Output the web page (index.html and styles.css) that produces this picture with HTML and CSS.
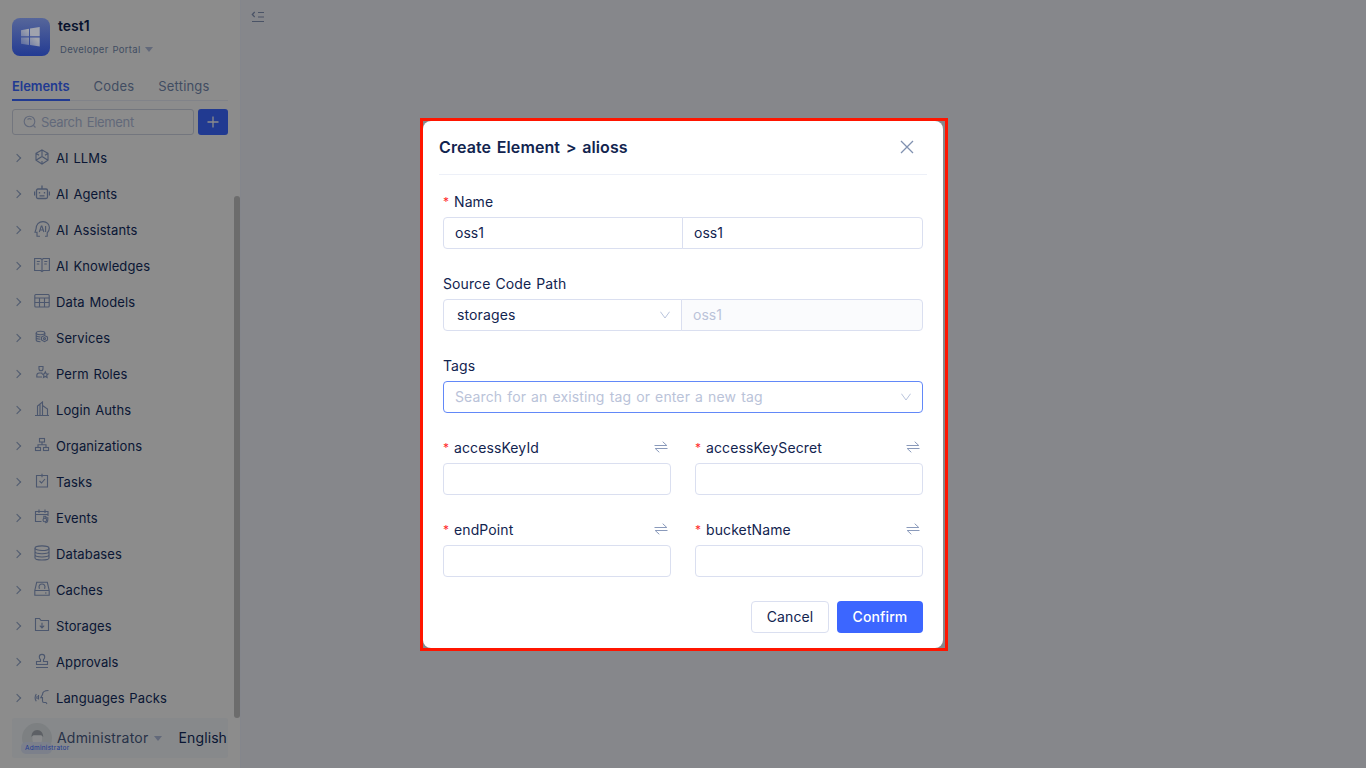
FILE: index.html
```html
<!DOCTYPE html>
<html lang="en">
<head>
<meta charset="utf-8">
<title>Create Element</title>
<link rel="stylesheet" href="styles.css">
</head>
<body>
<div class="app">
  <aside class="sidebar">
    <header class="brand">
      <div class="logo">
        <svg width="38" height="38" viewBox="0 0 38 38"><defs><linearGradient id="pane" x1="1" y1="0" x2="0" y2="1"><stop offset=".4" stop-color="#a0a3ad"/><stop offset="1" stop-color="#5566a0"/></linearGradient></defs><path fill="url(#pane)" d="M9 12.200l8-1.500v7.600H9zM18 10.500l9.700-1.500v9.300H18zM9 19.400h8v7.600l-8-1.300zM18 19.400h9.700V28.500l-9.700-1.400z"/></svg>
      </div>
      <div class="brand-text">
        <div class="brand-name">test1</div>
        <div class="portal">Developer Portal<i class="caret"></i></div>
      </div>
    </header>
    <nav class="tabs"><span class="tab active">Elements</span><span class="tab">Codes</span><span class="tab">Settings</span></nav>
    <div class="search-row">
      <div class="search"><svg width="14" height="14" viewBox="0 0 14 14" class="line"><circle cx="6.500" cy="6.500" r="5.300"/><path d="M10.500 10.500l2 2M4.500 4.500a3 3 0 0 1 4 0"/></svg><span>Search Element</span></div>
      <button class="add"><svg width="12" height="12" viewBox="0 0 12 12"><path d="M6 .5v11M.5 6h11" stroke="#8c8c8c" stroke-width="1.300"/></svg></button>
    </div>
    <ul class="tree">
      <li><i class="arrow"></i><svg class="line" viewBox="0 0 16 16"><path d="M8 1l6 3.300v7L8 15l-6-3.700v-7zM8 1v6.500M2 11.300l6-3.800 6 3.800M2 4.300l3 2M14 4.300l-3 2M8 15v-3"/></svg><span>AI LLMs</span></li>
      <li><i class="arrow"></i><svg class="line strong" viewBox="0 0 16 16"><rect x="2.500" y="4" width="11" height="9.500" rx="1.500"/><path d="M8 4V.5M.5 6.500v4M15.500 6.500v4M5.500 7v1.500M10.500 7v1.500M5.500 10.800h5"/></svg><span>AI Agents</span></li>
      <li><i class="arrow"></i><svg class="line" viewBox="0 0 16 16"><path d="M6 15.200H3v-4H1l1-3C2 3.500 4.800.6 9 .6c3.800 0 6.400 2.700 6.400 6.200 0 2.500-1 3.700-2.200 5v3.400H11M5.300 11l2-6h.6l2 6M6 9h3.300M11.600 5v6"/></svg><span>AI Assistants</span></li>
      <li><i class="arrow"></i><svg class="line" viewBox="0 0 16 16"><path d="M.6 1.500h6L8 2.500l1.400-1h6v12h-6l-1.400 1-1.400-1h-6zM8 2.500v12M2.800 4.500h3M2.800 7h2.500M10.300 4.500h3M10.300 7h2.500"/></svg><span>AI Knowledges</span></li>
      <li><i class="arrow"></i><svg class="line" viewBox="0 0 16 16"><rect x=".8" y="1.500" width="14.400" height="12.500" rx="1"/><path d="M.8 5h14.400M.8 9.500h14.400M5.500 5v9M10.500 5v9"/></svg><span>Data Models</span></li>
      <li><i class="arrow"></i><svg class="line" viewBox="0 0 16 16"><ellipse cx="6.500" cy="4" rx="4.300" ry="1.700"/><path d="M2.200 4v7c0 1 1.600 1.700 4.300 1.700M10.800 4v2M2.200 6.300c0 1.100 2 1.700 4.300 1.700M2.200 8.600c0 1.100 2 1.700 4.300 1.700"/><path d="M10.500 6.500l3 1.500v3l-3 1.700-3-1.700V8z"/><circle cx="10.500" cy="9.600" r="1"/></svg><span>Services</span></li>
      <li><i class="arrow"></i><svg class="line" viewBox="0 0 16 16"><path d="M5 1.500h4v2.300C9 5 8.200 5.800 7 5.800S5 5 5 3.800zM8 12H2.800v-1.500c0-1.600 1-2.500 2.500-2.500h3M11.300 6.800l.9 1.900 2 .2-1.500 1.400.4 2.100-1.800-1-1.800 1 .4-2.100-1.500-1.400 2-.2z"/></svg><span>Perm Roles</span></li>
      <li><i class="arrow"></i><svg class="line" viewBox="0 0 16 16"><path d="M1 14.500h14M3.500 14.500V5L8.500 1v13.500M8.500 4.500L13.500 8v6.500M6 14.500V3"/></svg><span>Login Auths</span></li>
      <li><i class="arrow"></i><svg class="line" viewBox="0 0 16 16"><rect x="5.500" y="1.500" width="5" height="3.500"/><rect x="1.500" y="10.500" width="5" height="3"/><rect x="9.500" y="10.500" width="5" height="3"/><path d="M8 5v2.700M4 10.500V7.700h8v2.800"/></svg><span>Organizations</span></li>
      <li><i class="arrow"></i><svg class="line" viewBox="0 0 16 16"><path d="M6 2.500H2.500v11.500h11V2.500H10M6 2.500h4M8 .8v3.500M5.500 8l2 2 3.500-4"/></svg><span>Tasks</span></li>
      <li><i class="arrow"></i><svg class="line" viewBox="0 0 16 16"><path d="M7.500 12.500h-6v-10h12.500v4.500M1.500 5.500h12.500M5 .5v3.500M11 .5v3.500"/><circle cx="10.800" cy="11" r="1.800"/><path d="M9.800 9.400V7.300h2v2.500M11.800 8.700h2v2c0 2.200-1 3-2.700 3"/></svg><span>Events</span></li>
      <li><i class="arrow"></i><svg class="line" viewBox="0 0 16 16"><ellipse cx="8" cy="3.200" rx="7" ry="2.300"/><path d="M1 3.200V13c0 1.300 3 2 7 2s7-.7 7-2V3.200M1 6.500c0 1.300 3 2.200 7 2.200s7-.9 7-2.200M1 9.800C1 11.100 4 12 8 12s7-.9 7-2.200"/></svg><span>Databases</span></li>
      <li><i class="arrow"></i><svg class="line" viewBox="0 0 16 16"><path d="M2.700 1.300h10.600L15.200 9.500v4.700H.8V9.500zM.8 9.500h14.400M11 12h1.500M4.700 7.300h1.300M10 7.300h1.300M5.300 7.300c-1-2.800.7-4.300 2.700-4.300s3.700 1.500 2.700 4.300"/></svg><span>Caches</span></li>
      <li><i class="arrow"></i><svg class="line" viewBox="0 0 16 16"><path d="M1.500 13.500V1.500h4l1.500 2h7.500v10zM8 5.700v5M5.800 8.700L8 10.900l2.200-2.200"/></svg><span>Storages</span></li>
      <li><i class="arrow"></i><svg class="line" viewBox="0 0 16 16"><path d="M2 14.500h12M2.500 11.500V8.500h4V6.500C5.600 5.800 5.300 5 5.300 4c0-1.500 1.200-2.600 2.700-2.600S10.700 2.500 10.700 4c0 1-.3 1.800-1.200 2.500v2h4v3z"/></svg><span>Approvals</span></li>
      <li><i class="arrow"></i><svg class="line" viewBox="0 0 16 16"><path d="M14.500 1.500c-4.500 0-6 1-6 4L6.800 8.600h1.700V12c0 1 .5 1.500 1.500 1.500h2l1 1.500M4.500 6v4.500M2.300 5c-1.500 2.300-1.500 5 0 7.300M3.300 7c-.6 1-.6 2 0 3"/></svg><span>Languages Packs</span></li>
    </ul>
    <footer class="user">
      <div class="avatar"><svg width="30" height="30" viewBox="0 0 30 30"><circle cx="15" cy="15" r="15" fill="#7d8082"/><path d="M9.500 14c0-4 2-7 5.700-7s6 3 6 7l-2-2h-7.700z" fill="#5d6065"/><path d="M10.500 13h9.500v4a4.700 4.700 0 0 1-9.500 0z" fill="#898a8c"/></svg><span class="badge">Administrator</span></div>
      <span class="user-name">Administrator</span><i class="caret"></i><span class="lang">English</span>
    </footer>
    <div class="thumb"></div>
  </aside>
  <main class="main"><svg width="14" height="14" viewBox="0 0 14 14" class="fold"><path d="M3.700 2L1.300 4.500 3.700 7M7 2.500h6M7 7h6M1 11.500h12"/></svg></main>
</div>

<div class="frame">
  <section class="dialog">
    <header class="dialog-head"><h1>Create Element &gt; alioss</h1><svg width="14" height="14" viewBox="0 0 14 14"><path d="M1 1l12 12M13 1L1 13" stroke="#8091b0" stroke-width="1.300"/></svg></header>
    <form class="form">
      <div class="field"><label class="label"><b>*</b>Name</label>
        <div class="pair"><div class="input">oss1</div><div class="input">oss1</div></div></div>
      <div class="field"><label class="label">Source Code Path</label>
        <div class="pair source"><div class="input select">storages<svg width="10" height="8" viewBox="0 0 10 8"><path d="M.4.700L5 7 9.600.700"/></svg></div><div class="input disabled">oss1</div></div></div>
      <div class="field"><label class="label">Tags</label>
        <div class="input select focus"><span>Search for an existing tag or enter a new tag</span><svg width="10" height="8" viewBox="0 0 10 8"><path d="M.4.700L5 7 9.600.700"/></svg></div></div>
      <div class="grid">
        <div class="field"><label class="label"><b>*</b>accessKeyId<svg class="swap" viewBox="0 0 14 12"><path d="M.5 4.500h12.300L8.700.700M13.500 7.500H1.200l4.100 3.800"/></svg></label><div class="input"></div></div>
        <div class="field"><label class="label"><b>*</b>accessKeySecret<svg class="swap" viewBox="0 0 14 12"><path d="M.5 4.500h12.300L8.700.700M13.500 7.500H1.200l4.100 3.800"/></svg></label><div class="input"></div></div>
        <div class="field"><label class="label"><b>*</b>endPoint<svg class="swap" viewBox="0 0 14 12"><path d="M.5 4.500h12.300L8.700.700M13.500 7.500H1.200l4.100 3.800"/></svg></label><div class="input"></div></div>
        <div class="field"><label class="label"><b>*</b>bucketName<svg class="swap" viewBox="0 0 14 12"><path d="M.5 4.500h12.300L8.700.700M13.500 7.500H1.200l4.100 3.800"/></svg></label><div class="input"></div></div>
      </div>
      <div class="actions"><button type="button" class="btn">Cancel</button><button type="button" class="btn primary">Confirm</button></div>
    </form>
  </section>
</div>
</body>
</html>
```

FILE: styles.css
```css
* { box-sizing: border-box; }
body { margin: 0; width: 1366px; height: 768px; overflow: hidden; font-family: Inter, sans-serif; font-size: 14px; color: #0d1c3d; }
svg { display: block; flex: none; fill: none; }
.app { display: flex; height: 768px; }
.sidebar { position: relative; width: 241px; padding: 18px 12px 0; background: #8c8c8c; border-right: 1px solid #84868c; }
.main { flex: 1; background: #86878b; padding: 10px; }
.fold { stroke: #4a5366; stroke-width: 1.2; }
.line { stroke: #4c576e; stroke-width: 1.1; }
.brand { display: flex; gap: 8px; height: 53px; }
.logo { width: 38px; height: 38px; border-radius: 8px; background: linear-gradient(#56669a, #233b93); }
.brand-name { font-size: 14px; font-weight: 600; line-height: 16px; color: #07122e; }
.portal { display: flex; align-items: center; gap: 4px; margin: 9px 0 0 2px; font-size: 9.5px; line-height: 13px; letter-spacing: .3px; word-spacing: 1px; color: #414c62; }
.caret { border: 4.5px solid transparent; border-top: 5px solid #62697a; border-bottom: 0; }
.tabs { display: flex; gap: 24px; height: 30px; border-bottom: 1px solid #818389; font-size: 13px; line-height: 30px; letter-spacing: .2px; color: #414c62; }
.tab.active { height: 30px; border-bottom: 2px solid #213a91; color: #213a91; font-weight: 600; letter-spacing: -.05px; }
.search-row { display: flex; gap: 4px; margin-top: 8px; }
.search { display: flex; align-items: center; gap: 4px; width: 182px; height: 26px; padding-left: 10px; border: 1px solid #73767e; border-radius: 3px; color: #62697a; font-size: 13px; letter-spacing: -.5px; word-spacing: 1.5px; }
.search .line { stroke: #62697a; }
.search span { letter-spacing: -.35px; }
.add { width: 30px; height: 26px; padding: 0 9px; border: 0; border-radius: 3px; background: #213a91; }
.tree { list-style: none; margin: 5px 0 0; padding: 0; font-size: 13px; letter-spacing: .1px; word-spacing: 1px; color: #0a1634; }
.tree li { display: flex; align-items: center; height: 36px; }
.arrow { width: 6px; height: 6px; margin: 0 16px 0 2px; border: solid #505b70; border-width: 1px 1px 0 0; transform: rotate(45deg); }
.tree svg { width: 16px; height: 16px; margin: -2px 6px 0 -2px; }
.tree svg.strong { stroke-width: 1.300; }
.tree span { line-height: 18px; }
.user { display: flex; align-items: center; height: 40px; margin-top: 2px; padding: 0 1px 0 10px; border-radius: 3px; background: #87898b; white-space: nowrap; color: #283248; }
.avatar { position: relative; width: 30px; height: 30px; margin-right: 5px; }
.badge { position: absolute; left: -1px; top: 19px; width: 31px; height: 12px; padding-left: 4px; border-radius: 5px; background: #7c808b; color: #213a91; font-size: 6.500px; line-height: 12px; letter-spacing: .25px; }
.user-name { margin: -2px 6px 0 0; letter-spacing: .2px; }
.lang { margin: -2px 0 0 auto; letter-spacing: .1px; color: #0a1634; }
.thumb { position: absolute; left: 234px; top: 196px; width: 6px; height: 522px; border-radius: 3px; background: #6c6c6c; }

.frame { position: absolute; left: 420px; top: 118px; width: 528px; height: 533px; border: 3px solid #ff1500; background: #86878b; }
.dialog { width: 520px; height: 527px; padding: 0 16px; border-radius: 8px; background: #fff; }
.dialog-head { display: flex; align-items: center; justify-content: space-between; height: 54px; padding: 0 13px 2px 0; border-bottom: 1px solid #edf0f8; }
.dialog-head h1 { margin: 0; font-size: 16px; font-weight: 600; letter-spacing: .1px; word-spacing: 1.5px; color: #12244f; }
.form { padding: 12px 4px 0; color: #12244f; }
.field { margin-bottom: 20px; }
.label { display: flex; align-items: center; height: 30px; padding-bottom: 2px; letter-spacing: .1px; word-spacing: 1px; }
.label b { width: 11px; color: #ff2b2b; font-size: 12px; font-weight: 400; }
.pair { display: flex; }
.pair .input { width: 240px; }
.pair .input + .input { width: 241px; margin-left: -1px; border-radius: 0 4px 4px 0; }
.pair .input:first-child { border-radius: 4px 0 0 4px; }
.pair.source .input:first-child { width: 239px; }
.pair.source .input + .input { width: 242px; }
.input { display: flex; align-items: center; height: 32px; padding: 0 11px 2px; border: 1px solid #dadff0; border-radius: 4px; background: #fff; }
.select { justify-content: space-between; padding-left: 13px; letter-spacing: .12px; }
.select svg { margin-top: 1px; stroke: #b9c4dc; }
.input.disabled { background: #fafbfd; color: #bac3d9; }
.input.focus { border-color: #6288f8; color: #bac3d9; padding-left: 11px; word-spacing: 1px; }
.grid { display: grid; grid-template-columns: 228px 228px; column-gap: 24px; }
.swap { width: 14px; height: 12px; margin: 0 3px 0 auto; stroke: #8a9abb; }
.actions { display: flex; justify-content: flex-end; gap: 8px; margin-top: 4px; }
.btn { width: 78px; height: 32px; padding: 0 0 2px; border: 1px solid #dadff0; border-radius: 4px; background: #fff; color: #12244f; font: 14px Inter, sans-serif; letter-spacing: .1px; }
.btn.primary { width: 86px; border: 0; background: #3c66ff; color: #fff; font-weight: 500; }
```
